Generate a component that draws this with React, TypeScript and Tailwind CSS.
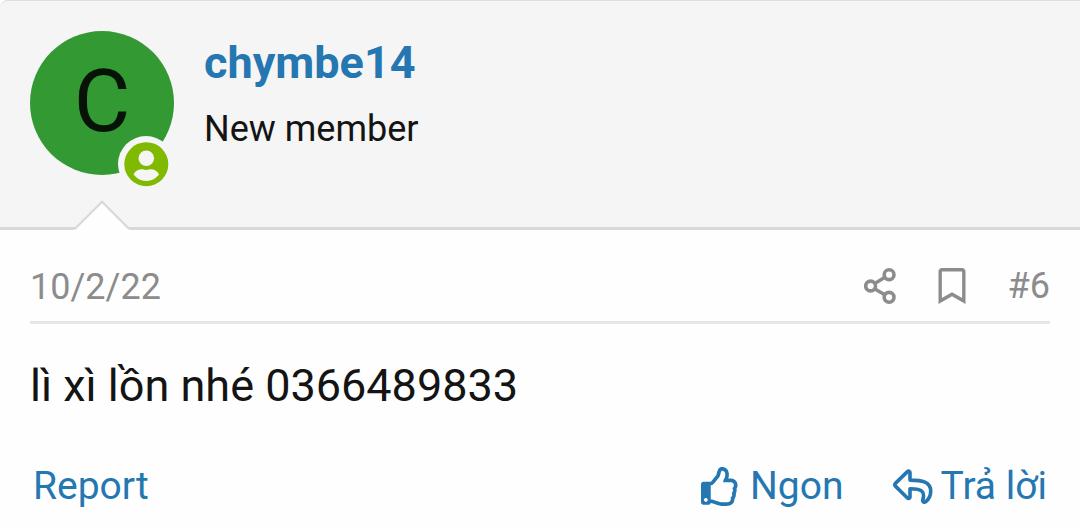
import { FaRegBookmark, FaRegThumbsUp } from "react-icons/fa";

interface Post {
  author: string;
  title: string;
  date: string;
  number: number;
  body: string;
}

const post: Post = {
  author: "chymbe14",
  title: "New member",
  date: "10/2/22",
  number: 6,
  body: "lì xì lồn nhé 0366489833",
};

const ShareIcon = () => (
  <svg
    className="h-9 w-8"
    viewBox="0 0 32 36"
    fill="none"
    stroke="currentColor"
    strokeWidth={3.6}
    aria-hidden="true"
  >
    <circle cx="6.6" cy="18" r="4.9" />
    <circle cx="25.1" cy="6.7" r="4.9" />
    <circle cx="25.1" cy="29.3" r="4.9" />
    <path d="M10.4 15.7 20.9 9.3M10.4 20.7l10.5 6" />
  </svg>
);

const ReplyIcon = () => (
  <svg
    className="h-10 w-[42px]"
    viewBox="0 0 42 40"
    fill="none"
    stroke="currentColor"
    strokeWidth={3.6}
    strokeLinejoin="round"
    aria-hidden="true"
  >
    <path d="M3.4 17.4 15.4 5.6c1.1-1.1 2.6-.6 2.6 1v7.5c12.3 0 20.7 1.9 20.7 11.2 0 4.2-2 8-4.9 10.4-1.6 1.3-3.6.2-3-1.8 2.2-7.8.4-11-12.8-11.1v8.1c0 1.6-1.5 2.1-2.6 1L3.4 20.1c-.8-.8-.8-1.9 0-2.7Z" />
  </svg>
);

const OnlineIcon = () => (
  <svg className="size-14" viewBox="0 0 56 56" aria-hidden="true">
    <circle cx="28" cy="28" r="28" fill="#f5f5f5" />
    <circle cx="28.3" cy="28.2" r="22" fill="#7fb900" />
    <g fill="#f5f5f5">
      <circle cx="28.3" cy="22.3" r="7.8" />
      <path d="M15.5 38.2c1.8-3 5-4.9 8.300-4.900 1.5 0 2.300.7 4.500.7s3-.7 4.500-.7c3.300 0 6.500 1.900 8.300 4.900-3 4.200-7.600 6.700-12.800 6.700s-9.800-2.500-12.800-6.700Z" />
    </g>
  </svg>
);

const PostHeader = () => (
  <header className="relative flex gap-[30px] rounded-tl-lg border-t border-b-3 border-t-[#dedede] border-b-[#d8d8d8] bg-[#f5f5f5] px-[30px] pt-[30px] pb-[52px]">
    <a
      href="#member"
      aria-label={post.author}
      className="relative flex size-36 shrink-0 justify-center rounded-full bg-[#339933] text-[87px] leading-[140px] text-[#061306]"
    >
      C
      <span className="absolute right-0 -bottom-[17px]">
        <OnlineIcon />
      </span>
    </a>

    <div className="flex min-w-0 flex-col gap-[9px] pt-0.5">
      <h1 className="text-[45px] leading-[60px] font-bold">
        <a href="#member" className="text-[#2577b1]">
          {post.author}
        </a>
      </h1>
      <p className="text-4xl leading-[54px]">{post.title}</p>
    </div>

    {/* Notch pointing at the avatar */}
    <svg
      className="absolute -bottom-[3px] left-[74px] h-[30px] w-14"
      viewBox="0 0 56 30"
      aria-hidden="true"
    >
      <path d="M0 30 28 2 56 30Z" fill="#fefefe" />
      <path d="M.7 29 28 1.700 55.300 29" fill="none" stroke="#d8d8d8" strokeWidth={2.2} />
    </svg>
  </header>
);

const PostActions = () => (
  <footer className="flex items-center justify-between px-[3px] text-[39px] leading-[54px] text-[#2577b1]">
    <a href="#report">Report</a>
    <div className="flex items-center gap-12">
      <button type="button" className="flex items-center gap-2.5">
        <FaRegThumbsUp aria-hidden="true" />
        Ngon
      </button>
      <button type="button" className="flex items-center gap-[7px]">
        <ReplyIcon />
        Trả lời
      </button>
    </div>
  </footer>
);

export default function App() {
  return (
    <article className="min-h-screen bg-[#fefefe] font-['Roboto',sans-serif] text-[#141414]">
      <PostHeader />

      <div className="px-[30px] pt-[30px] pb-3">
        <div className="flex items-start justify-between border-b-3 border-[#e7e7e7] pb-[7px] text-4xl leading-[54px] text-[#8c8c8c]">
          <time dateTime="2022-02-10">{post.date}</time>
          <div className="flex items-center gap-[42px] leading-[52px]">
            <button type="button" aria-label="Share">
              <ShareIcon />
            </button>
            <button type="button" aria-label="Bookmark">
              <FaRegBookmark className="h-9 w-7" aria-hidden="true" />
            </button>
            <a href="#post-6">#{post.number}</a>
          </div>
        </div>

        <p className="mt-[30px] mb-[42px] text-[45px] leading-[63px]">{post.body}</p>

        <PostActions />
      </div>
    </article>
  );
}
